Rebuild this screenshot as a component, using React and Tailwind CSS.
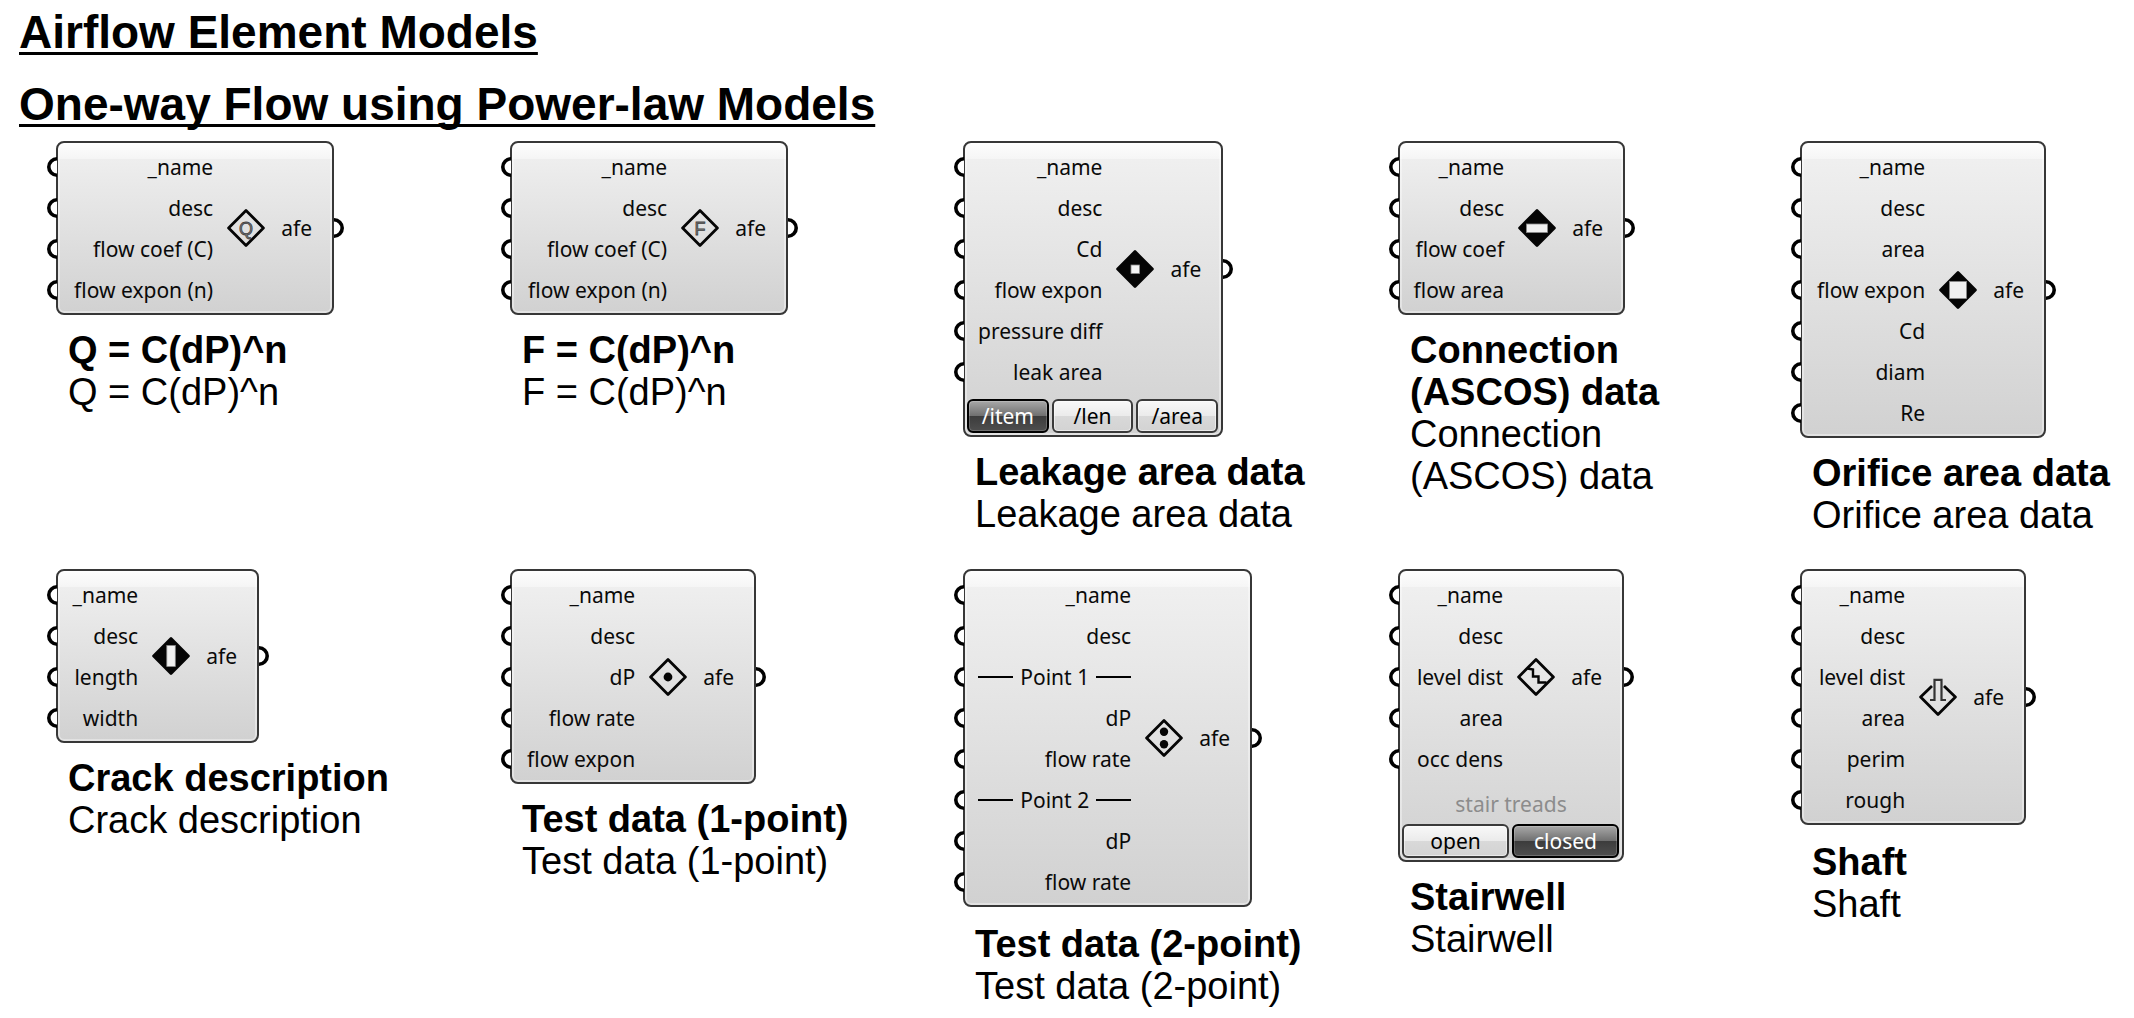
import { useState } from "react";

const DIAMOND = "M19 1.6 36.4 19 19 36.4 1.6 19Z";

function Diamond({ solid, children }) {
  return (
    <svg viewBox="0 0 38 38" className="size-[38px] shrink-0" aria-hidden="true">
      <path d={DIAMOND} fill={solid ? "#050505" : "none"} stroke="#050505" strokeWidth="2.8" strokeLinejoin="round" />
      {children}
    </svg>
  );
}

function LetterIcon({ letter }) {
  return (
    <Diamond>
      <text
        x="19"
        y="25.5"
        textAnchor="middle"
        fontFamily="Liberation Sans, sans-serif"
        fontSize="18"
        fill="#777"
        stroke="#444"
        strokeWidth="0.8"
      >
        {letter}
      </text>
    </Diamond>
  );
}

const icons = {
  q: <LetterIcon letter="Q" />,
  f: <LetterIcon letter="F" />,
  leak: (
    <Diamond solid>
      <rect x="15" y="15" width="8.5" height="8.5" fill="#f4f4f4" stroke="#8a8a8a" strokeWidth="0.8" />
    </Diamond>
  ),
  connection: (
    <Diamond solid>
      <rect x="8.5" y="15" width="21" height="8.5" fill="#f0f0f0" stroke="#8a8a8a" strokeWidth="0.8" />
    </Diamond>
  ),
  orifice: (
    <Diamond solid>
      <rect x="10.5" y="10.5" width="17" height="17" fill="#f0f0f0" stroke="#8a8a8a" strokeWidth="0.8" />
    </Diamond>
  ),
  crack: (
    <Diamond solid>
      <rect x="14.8" y="8.5" width="8.5" height="21" fill="#f0f0f0" stroke="#8a8a8a" strokeWidth="0.8" />
    </Diamond>
  ),
  onePoint: (
    <Diamond>
      <circle cx="19" cy="19" r="4.4" fill="#050505" />
    </Diamond>
  ),
  twoPoint: (
    <Diamond>
      <circle cx="19" cy="12.8" r="4.2" fill="#050505" />
      <circle cx="19" cy="25.2" r="4.2" fill="#050505" />
    </Diamond>
  ),
  stairs: (
    <Diamond>
      <path d="M10.5 10.5 16 11.5V18.5H21.5V24.5H29.5" fill="none" stroke="#050505" strokeWidth="2.4" />
    </Diamond>
  ),
  shaft: (
    <svg viewBox="0 0 38 38" className="size-[38px] shrink-0" aria-hidden="true">
      <path d="M13 8 1.6 19 19 36.4 36.4 19 25 8" fill="none" stroke="#050505" strokeWidth="2.8" strokeLinejoin="round" />
      <path d="M11 22H15.5V1.8H22.5V22H27" fill="none" stroke="#333" strokeWidth="2.2" />
    </svg>
  ),
};

const models = [
  { title: "Q = C(dP)^n", icon: "q", width: "w-[278px]", inputs: ["_name", "desc", "flow coef (C)", "flow expon (n)"] },
  { title: "F = C(dP)^n", icon: "f", width: "w-[278px]", inputs: ["_name", "desc", "flow coef (C)", "flow expon (n)"] },
  {
    title: "Leakage area data",
    icon: "leak",
    width: "w-[260px]",
    inputs: ["_name", "desc", "Cd", "flow expon", "pressure diff", "leak area"],
    options: ["/item", "/len", "/area"],
    selected: "/item",
  },
  {
    title: "Connection (ASCOS) data",
    icon: "connection",
    width: "w-[227px]",
    caption: "mt-[14px] max-w-64",
    inputs: ["_name", "desc", "flow coef", "flow area"],
  },
  { title: "Orifice area data", icon: "orifice", width: "w-[246px]", inputs: ["_name", "desc", "area", "flow expon", "Cd", "diam", "Re"] },
  { title: "Crack description", icon: "crack", width: "w-[203px]", inputs: ["_name", "desc", "length", "width"] },
  { title: "Test data (1-point)", icon: "onePoint", width: "w-[246px]", inputs: ["_name", "desc", "dP", "flow rate", "flow expon"] },
  {
    title: "Test data (2-point)",
    icon: "twoPoint",
    width: "w-[289px]",
    caption: "mt-4",
    inputs: ["_name", "desc", { divider: "Point 1" }, "dP", "flow rate", { divider: "Point 2" }, "dP", "flow rate"],
  },
  {
    title: "Stairwell",
    icon: "stairs",
    width: "w-[226px]",
    inputs: ["_name", "desc", "level dist", "area", "occ dens"],
    optionsLabel: "stair treads",
    options: ["open", "closed"],
    selected: "closed",
  },
  { title: "Shaft", icon: "shaft", width: "w-[226px]", caption: "mt-4", inputs: ["_name", "desc", "level dist", "area", "perim", "rough"] },
];

function Port({ side }) {
  return (
    <svg
      viewBox="0 0 10 20"
      aria-hidden="true"
      className={side === "left" ? "absolute -left-[11px] h-5 w-2.5" : "absolute -right-3 h-5 w-2.5 rotate-180"}
    >
      <path d="M10 1.8A8.2 8.2 0 0 0 10 18.2" fill="#fff" stroke="#000" strokeWidth="3.6" />
    </svg>
  );
}

function InputRow({ input }) {
  return (
    <li className="relative flex h-[41px] items-center justify-end pl-[13px]">
      <Port side="left" />
      {input.divider ? (
        <span className="flex items-center gap-[7px] whitespace-nowrap">
          <span className="h-0.5 w-[35px] bg-black" />
          {input.divider}
          <span className="h-0.5 w-[35px] bg-black" />
        </span>
      ) : (
        <span className="whitespace-nowrap">{input}</span>
      )}
    </li>
  );
}

function Options({ label, options, initial }) {
  const [value, setValue] = useState(initial);
  return (
    <div role="group" aria-label={label || "units"}>
      {label ? (
        <div className="flex h-[45px] items-center justify-center pt-1 text-[#8c8c8c]">{label}</div>
      ) : (
        <div className="h-[7px]" />
      )}
      <div className="flex gap-[3px] pr-[3px] pb-0.5 pl-0.5">
        {options.map((option) => (
          <button
            key={option}
            type="button"
            aria-pressed={option === value}
            onClick={() => setValue(option)}
            className={
              option === value
                ? "h-[34px] flex-1 rounded-md border-2 border-black bg-[linear-gradient(#a8a8a8_0%,#707070_49%,#3c3c3c_50%,#4e4e4e_100%)] text-[21px] leading-[30px] text-white shadow-[inset_0_0_0_1px_#ffffff30]"
                : "h-[34px] flex-1 rounded-md border-2 border-[#3a3a3a] bg-[linear-gradient(#f8f8f8_0%,#ebebeb_49%,#d9d9d9_50%,#d3d3d3_100%)] text-[21px] leading-[30px] text-black shadow-[inset_0_0_0_1px_#ffffff80]"
            }
          >
            {option}
          </button>
        ))}
      </div>
    </div>
  );
}

function Model({ model }) {
  return (
    <article>
      <div
        className={`${model.width} rounded-lg border-2 border-[#373737] bg-[linear-gradient(#ffffffd8_0px,#ffffff68_16px,transparent_16px),linear-gradient(#f1f1f1,#d1d1d1)] font-['Noto_Sans',sans-serif] text-[21px] leading-7 text-[#0a0a0a] shadow-[inset_0_0_0_2px_#ffffff60]`}
      >
        <div className={model.options ? "flex pt-[3px]" : "flex py-[3px]"}>
          <ul className="flex-1">
            {model.inputs.map((input, i) => (
              <InputRow key={i} input={input} />
            ))}
          </ul>
          <div className="relative flex items-center gap-4 pr-5 pl-3.5">
            {icons[model.icon]}
            <span>afe</span>
            <Port side="right" />
          </div>
        </div>
        {model.options && <Options label={model.optionsLabel} options={model.options} initial={model.selected} />}
      </div>
      <div className={`ml-3 text-[38px] leading-[42px] ${model.caption || "mt-[14px]"}`}>
        <h3 className="font-bold">{model.title}</h3>
        <p>{model.title}</p>
      </div>
    </article>
  );
}

export default function App() {
  return (
    <main className="min-h-screen bg-white font-['Liberation_Sans',Arial,sans-serif] text-black">
      <header className="flex flex-col gap-2 pl-[19px] text-[46px] leading-[64px] font-bold underline decoration-3 underline-offset-4 [text-decoration-skip-ink:none]">
        <h1>Airflow Element Models</h1>
        <h2>One-way Flow using Power-law Models</h2>
      </header>
      <section className="mt-[5px] grid grid-cols-[454fr_453fr_435fr_402fr_334fr] gap-y-[33px] pl-14">
        {models.map((model) => (
          <Model key={model.title} model={model} />
        ))}
      </section>
    </main>
  );
}
